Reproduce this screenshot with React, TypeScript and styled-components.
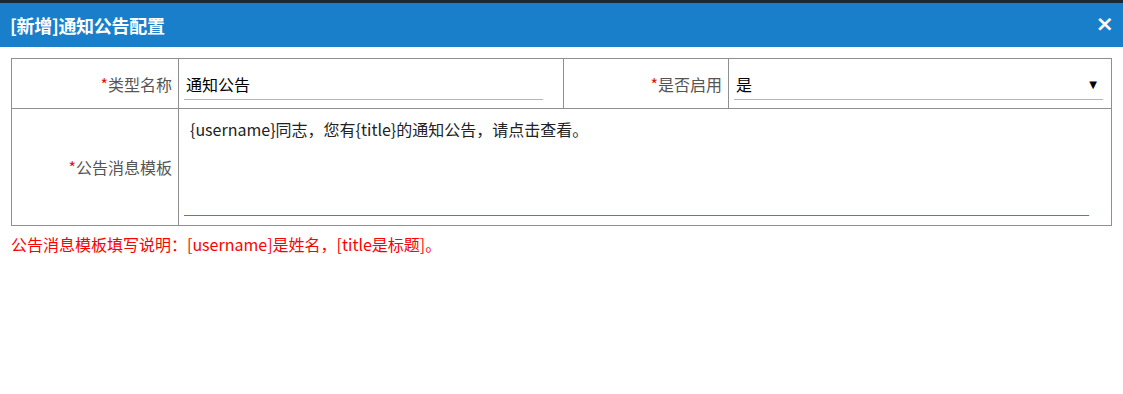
import styled, { createGlobalStyle } from 'styled-components';

const GlobalStyle = createGlobalStyle`
    html, body {
        margin: 0;
        padding: 0;
        background: #fff;
    }
    body {
        font-family: "Noto Sans CJK SC", "Noto Sans", "Liberation Sans", sans-serif;
        font-size: 16px;
        color: #333;
    }
`;

const Dialog = styled.div`
    width: 1123px;
    height: 394px;
    background: #fff;
    border-top: 3px solid #1c2833;
    box-sizing: border-box;
`;

const Header = styled.div`
    height: 44px;
    background: #1a7fcb;
    display: flex;
    align-items: center;
    justify-content: space-between;
    padding: 0 9px 0 10px;
    .title {
        color: #fff;
        font-size: 18px;
        font-weight: 700;
        letter-spacing: -0.3px;
    }
    .close {
        color: #fff;
        font-size: 22px;
        font-weight: 700;
        line-height: 1;
        font-family: "DejaVu Sans", sans-serif;
        margin-top: -2px;
    }
`;

const Body = styled.div`
    padding: 11px 11px 0 11px;
`;

const FormTable = styled.div`
    display: grid;
    grid-template-columns: 167px 385px 165px 1fr;
    grid-template-rows: 50px 117px;
    border-top: 1px solid #8f8f8f;
    border-left: 1px solid #8f8f8f;
`;

const Cell = styled.div<{ $span?: number; $label?: boolean }>`
    grid-column: span ${(p) => p.$span ?? 1};
    border-right: 1px solid #8f8f8f;
    border-bottom: 1px solid #8f8f8f;
    display: flex;
    align-items: center;
    justify-content: ${(p) => (p.$label ? 'flex-end' : 'flex-start')};
    padding: ${(p) => (p.$label ? '0 6px 0 0' : '0 0 0 5px')};
    color: ${(p) => (p.$label ? '#555' : '#000')};
    box-sizing: border-box;
    min-width: 0;
`;

const Star = styled.span`
    color: #e01010;
`;

const LineInput = styled.div<{ $right: number }>`
    flex: 1;
    margin-right: ${(p) => p.$right}px;
    height: 30px;
    margin-top: 2px;
    border-bottom: 1px solid #b5b5b5;
    display: flex;
    align-items: center;
    justify-content: space-between;
    padding: 0 0 0 2px;
    color: #000;
    .arrow {
        font-size: 10px;
        margin-right: 6px;
        font-family: "DejaVu Sans", sans-serif;
    }
`;

const TextCell = styled(Cell)`
    align-items: stretch;
    padding: 0 22px 9px 5px;
`;

const TextArea = styled.div`
    flex: 1;
    border-bottom: 1px solid #1890e0;
    padding: 9px 6px;
    color: #222;
    line-height: 22px;
`;

const Note = styled.div`
    color: #f00;
    margin-top: 6px;
`;

export default function App() {
    return (
        <>
            <GlobalStyle />
            <Dialog>
                <Header>
                    <span className="title">[新增]通知公告配置</span>
                    <span className="close">×</span>
                </Header>
                <Body>
                    <FormTable>
                        <Cell $label>
                            <Star>*</Star>类型名称
                        </Cell>
                        <Cell>
                            <LineInput $right={20}>通知公告</LineInput>
                        </Cell>
                        <Cell $label>
                            <Star>*</Star>是否启用
                        </Cell>
                        <Cell>
                            <LineInput $right={8}>
                                <span>是</span>
                                <span className="arrow">▼</span>
                            </LineInput>
                        </Cell>
                        <Cell $label>
                            <Star>*</Star>公告消息模板
                        </Cell>
                        <TextCell $span={3}>
                            <TextArea>{'{username}同志，您有{title}的通知公告，请点击查看。'}</TextArea>
                        </TextCell>
                    </FormTable>
                    <Note>公告消息模板填写说明：[username]是姓名，[title是标题]。</Note>
                </Body>
            </Dialog>
        </>
    );
}
